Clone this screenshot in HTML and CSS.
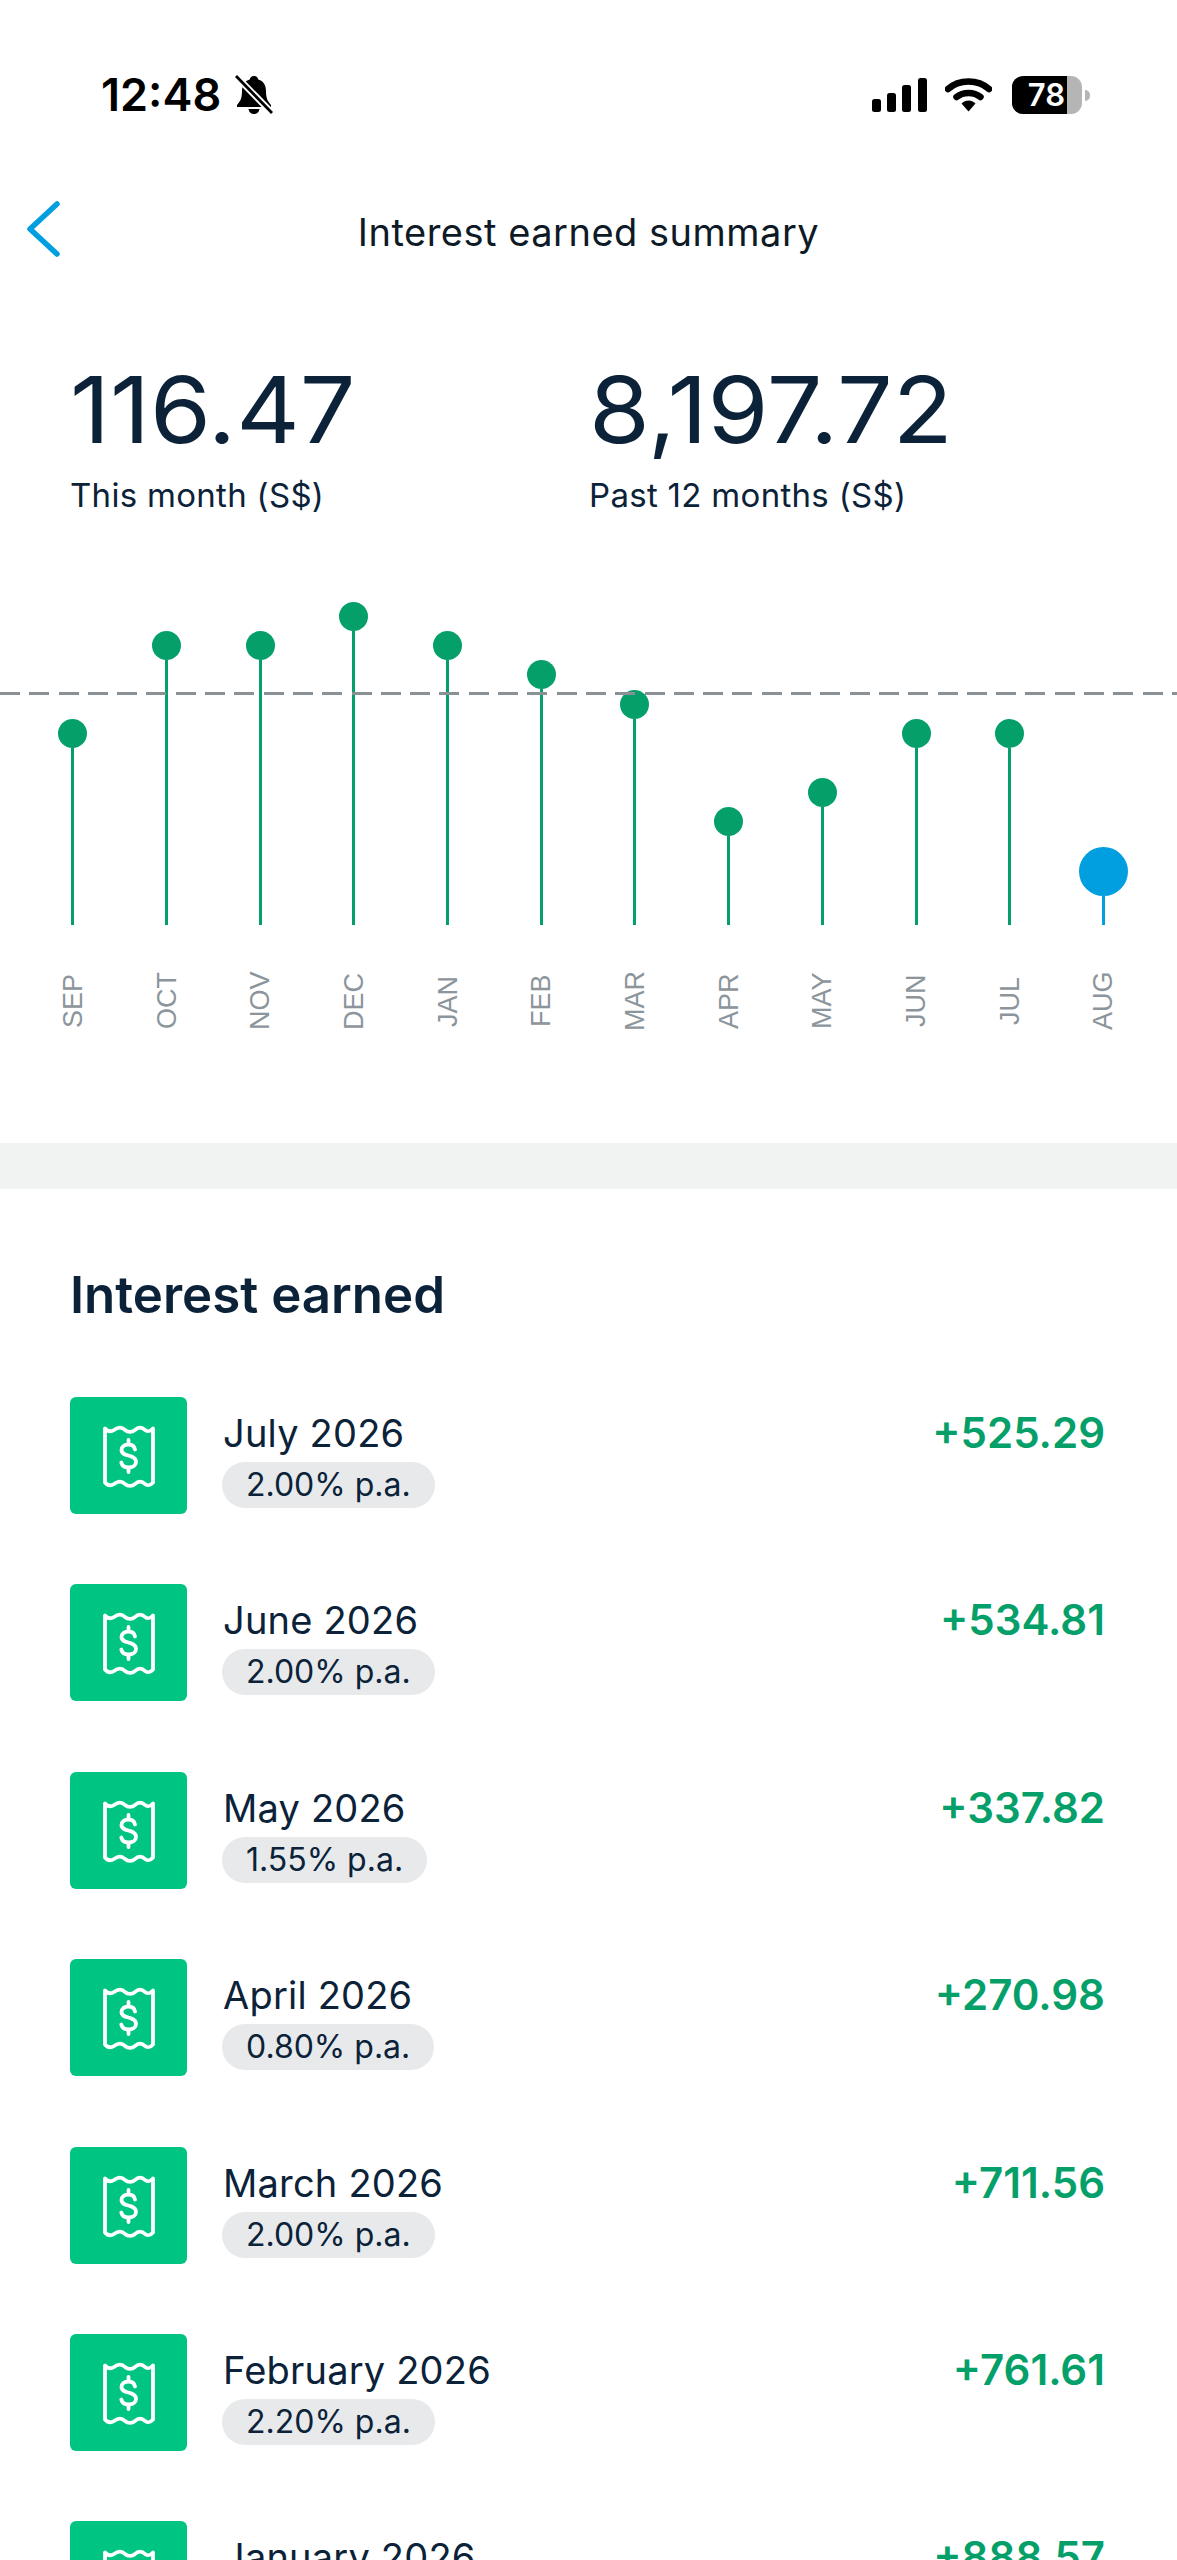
FILE: index.html
```html
<!DOCTYPE html>
<html lang="en">
<head>
    <meta charset="UTF-8">
    <meta name="viewport" content="width=device-width, initial-scale=1.0">
    <title>Interest earned summary</title>
    <link rel="stylesheet" href="styles.css">
</head>
<body>
    <svg class="icon-defs" width="0" height="0">
        <symbol id="receipt" viewBox="0 0 117 117">
            <path d="M35 31.5 L35 85.5 C38 89 41 89 44 87 C48 84 52 84 55 87 C58 89.5 62 89.5 65 87 C68 84 72 84 75 87 C78 89 80 89 83 85.5 L83 31.5 C80 35 78 35 75 33 C72 30 68 30 65 33 C62 35.5 58 35.5 55 33 C52 30 48 30 44 33 C41 35 38 35 35 31.5 Z" fill="none" stroke="#fff" stroke-width="3.8" stroke-linejoin="round"/>
            <path d="M65 52.5 C64.5 49.5 62 47.5 58.5 47.5 C54.5 47.5 51.5 49.7 51.5 53 C51.5 60.5 66 56.5 66 65 C66 68.3 62.8 70.5 58.5 70.5 C54.8 70.5 52 68.5 51.3 65.5 M58.5 43 L58.5 47.5 M58.5 70.5 L58.5 75" fill="none" stroke="#fff" stroke-width="3.8" stroke-linecap="round"/>
        </symbol>
    </svg>

    <div class="status-bar">
        <div class="status-left">
            <span class="clock">12:48</span>
            <svg class="bell" width="38" height="40" viewBox="0 0 38 40">
                <path d="M19 1 C21.5 1 23 2.6 23.3 4.6 C28.5 6 31 10.5 31 16 C31 23 32.5 26 36 30 L36 32 L2 32 L2 30 C5.5 26 7 23 7 16 C7 10.5 9.5 6 14.7 4.6 C15 2.6 16.5 1 19 1 Z M13.5 34 L24.5 34 C24 37.2 22 39 19 39 C16 39 14 37.2 13.5 34 Z" fill="#000"/>
                <path d="M1 1 L37 38" stroke="#fff" stroke-width="6.5"/>
                <path d="M1 1 L37 38" stroke="#000" stroke-width="2.8"/>
            </svg>
        </div>
        <div class="status-right">
            <svg class="signal" width="55" height="34" viewBox="0 0 55 34">
                <rect x="0" y="21" width="9" height="13" rx="2.5"/>
                <rect x="15" y="15" width="9" height="19" rx="2.5"/>
                <rect x="30" y="7" width="9" height="27" rx="2.5"/>
                <rect x="46" y="0" width="9" height="34" rx="2.5"/>
            </svg>
            <svg class="wifi" width="47" height="34" viewBox="0 0 47 34">
                <path d="M3 11 C14 1 33 1 44 11" fill="none" stroke="#000" stroke-width="6.5" stroke-linecap="round"/>
                <path d="M11.5 19 C18 13.5 29 13.5 35.5 19" fill="none" stroke="#000" stroke-width="6.5" stroke-linecap="round"/>
                <path d="M16.5 25.5 C20.5 21.5 26.5 21.5 30.5 25.5 L23.5 33.5 Z" fill="#000"/>
            </svg>
            <div class="battery">
                <div class="battery-level">78</div>
            </div>
            <div class="battery-nub"></div>
        </div>
    </div>

    <div class="nav">
        <svg class="back" width="36" height="58" viewBox="0 0 36 58">
            <path d="M32 4 L5 29 L32 54" fill="none" stroke="#019fdf" stroke-width="5.5" stroke-linecap="round" stroke-linejoin="round"/>
        </svg>
        <div class="nav-title">Interest earned summary</div>
    </div>

    <div class="stats">
        <div class="stat stat-month">
            <div class="stat-value">116.47</div>
            <div class="stat-label">This month (S$)</div>
        </div>
        <div class="stat">
            <div class="stat-value">8,197.72</div>
            <div class="stat-label">Past 12 months (S$)</div>
        </div>
    </div>

    <div class="chart">
        <div class="avg-line"></div>
        <div class="month"><div class="dot"></div><div class="stem" style="height:177px"></div><div class="month-name">SEP</div></div>
        <div class="month"><div class="dot"></div><div class="stem" style="height:265px"></div><div class="month-name">OCT</div></div>
        <div class="month"><div class="dot"></div><div class="stem" style="height:265px"></div><div class="month-name">NOV</div></div>
        <div class="month"><div class="dot"></div><div class="stem" style="height:294px"></div><div class="month-name">DEC</div></div>
        <div class="month"><div class="dot"></div><div class="stem" style="height:265px"></div><div class="month-name">JAN</div></div>
        <div class="month"><div class="dot"></div><div class="stem" style="height:236px"></div><div class="month-name">FEB</div></div>
        <div class="month"><div class="dot"></div><div class="stem" style="height:206px"></div><div class="month-name">MAR</div></div>
        <div class="month"><div class="dot"></div><div class="stem" style="height:89px"></div><div class="month-name">APR</div></div>
        <div class="month"><div class="dot"></div><div class="stem" style="height:118px"></div><div class="month-name">MAY</div></div>
        <div class="month"><div class="dot"></div><div class="stem" style="height:177px"></div><div class="month-name">JUN</div></div>
        <div class="month"><div class="dot"></div><div class="stem" style="height:177px"></div><div class="month-name">JUL</div></div>
        <div class="month month-current"><div class="dot"></div><div class="stem" style="height:29px"></div><div class="month-name">AUG</div></div>
    </div>

    <div class="divider"></div>

    <div class="earned">
        <h2>Interest earned</h2>

        <div class="row">
            <div class="row-icon"><svg width="117" height="117"><use href="#receipt"/></svg></div>
            <div class="row-info">
                <div class="row-name">July 2026</div>
                <div class="rate">2.00% p.a.</div>
            </div>
            <div class="amount">+525.29</div>
        </div>

        <div class="row">
            <div class="row-icon"><svg width="117" height="117"><use href="#receipt"/></svg></div>
            <div class="row-info">
                <div class="row-name">June 2026</div>
                <div class="rate">2.00% p.a.</div>
            </div>
            <div class="amount">+534.81</div>
        </div>

        <div class="row">
            <div class="row-icon"><svg width="117" height="117"><use href="#receipt"/></svg></div>
            <div class="row-info">
                <div class="row-name">May 2026</div>
                <div class="rate">1.55% p.a.</div>
            </div>
            <div class="amount">+337.82</div>
        </div>

        <div class="row">
            <div class="row-icon"><svg width="117" height="117"><use href="#receipt"/></svg></div>
            <div class="row-info">
                <div class="row-name">April 2026</div>
                <div class="rate">0.80% p.a.</div>
            </div>
            <div class="amount">+270.98</div>
        </div>

        <div class="row">
            <div class="row-icon"><svg width="117" height="117"><use href="#receipt"/></svg></div>
            <div class="row-info">
                <div class="row-name">March 2026</div>
                <div class="rate">2.00% p.a.</div>
            </div>
            <div class="amount">+711.56</div>
        </div>

        <div class="row">
            <div class="row-icon"><svg width="117" height="117"><use href="#receipt"/></svg></div>
            <div class="row-info">
                <div class="row-name">February 2026</div>
                <div class="rate">2.20% p.a.</div>
            </div>
            <div class="amount">+761.61</div>
        </div>

        <div class="row">
            <div class="row-icon"><svg width="117" height="117"><use href="#receipt"/></svg></div>
            <div class="row-info">
                <div class="row-name">January 2026</div>
            </div>
            <div class="amount">+888.57</div>
        </div>
    </div>
</body>
</html>
```

FILE: styles.css
```css
html {
    height: 2560px;
    overflow: hidden;
}

body {
    font-family: 'Inter', 'Liberation Sans', sans-serif;
    background-color: #fff;
    color: #0b2239;
    margin: 0;
    padding: 0;
    height: 2560px;
    overflow: hidden;
}

.icon-defs {
    position: absolute;
}

/* status bar */
.status-bar {
    display: flex;
    justify-content: space-between;
    align-items: center;
    height: 76px;
    padding: 57px 87px 0 101px;
    color: #000;
}

.status-left {
    display: flex;
    align-items: center;
    gap: 14px;
}

.clock {
    font-size: 45px;
    font-weight: 600;
    line-height: 56px;
    letter-spacing: 0;
}

.status-right {
    display: flex;
    align-items: center;
}

.signal {
    margin-right: 18px;
}

.wifi {
    margin-right: 20px;
}

.battery {
    width: 70px;
    height: 38px;
    background-color: #b5b5b5;
    border-radius: 11px;
    overflow: hidden;
}

.battery-level {
    width: 55px;
    height: 38px;
    background-color: #000;
    color: #fff;
    font-size: 31px;
    font-weight: 600;
    line-height: 38px;
    text-align: right;
    padding-right: 2px;
    box-sizing: border-box;
}

.battery-nub {
    width: 5px;
    height: 11px;
    margin-left: 3px;
    background-color: #b5b5b5;
    border-radius: 0 6px 6px 0;
}

/* nav */
.nav {
    display: flex;
    justify-content: center;
    align-items: center;
    position: relative;
    height: 58px;
    margin-top: 67px;
}

.back {
    position: absolute;
    left: 25px;
    top: 0;
}

.nav-title {
    font-size: 38px;
    line-height: 58px;
    letter-spacing: 0.5px;
    margin-top: 6px;
    color: #0e1a26;
}

/* totals */
.stats {
    display: flex;
    padding: 0 70px;
    margin-top: 102px;
}

.stat-month {
    width: 519px;
}

.stat-value {
    font-size: 92px;
    line-height: 100px;
    transform: scaleX(1.07);
    transform-origin: left center;
}

.stat-label {
    font-size: 33px;
    line-height: 40px;
    letter-spacing: 0.3px;
    margin-top: 15px;
}

/* chart */
.chart {
    display: flex;
    position: relative;
    align-items: flex-start;
    padding: 0 0 107px 26px;
}

.avg-line {
    position: absolute;
    left: 0;
    right: 0;
    top: 177px;
    height: 3px;
    background-image: repeating-linear-gradient(to right, #8a9196 0, #8a9196 20px, transparent 20px, transparent 29.3px);
}

.month {
    display: flex;
    flex-direction: column;
    align-items: center;
    justify-content: flex-end;
    width: 93.7px;
    height: 521px;
}

.dot {
    width: 29px;
    height: 29px;
    border-radius: 50%;
    background-color: #05a06a;
}

.stem {
    width: 3px;
    background-color: #05a06a;
}

.month-name {
    height: 70px;
    margin-top: 41px;
    writing-mode: vertical-rl;
    transform: rotate(180deg);
    text-align: center;
    font-family: 'Liberation Sans', sans-serif;
    font-size: 27px;
    line-height: 30px;
    color: #8b959b;
}

.month-current .dot {
    width: 49px;
    height: 49px;
    background-color: #019fdf;
}

.month-current .stem {
    background-color: #019fdf;
}

.divider {
    height: 46px;
    background-color: #f1f3f3;
}

/* list */
.earned {
    padding: 0 72px 0 70px;
}

.earned h2 {
    font-size: 51px;
    font-weight: 600;
    line-height: 60px;
    margin: 76px 0 72px;
}

.row {
    display: flex;
    height: 117px;
    margin-bottom: 70.4px;
}

.row-icon {
    width: 117px;
    height: 117px;
    border-radius: 6px;
    background-color: #00c482;
    flex-shrink: 0;
}

.row-info {
    flex: 1;
    margin-left: 36px;
    padding-top: 11px;
}

.row-name {
    font-size: 38px;
    line-height: 50px;
    letter-spacing: 0.2px;
    margin-bottom: 4px;
}

.rate {
    display: inline-block;
    height: 46px;
    line-height: 46px;
    padding: 0 24px;
    margin-left: -1px;
    border-radius: 23px;
    background-color: #e7e9eb;
    font-size: 32px;
}

.amount {
    font-size: 42px;
    font-weight: 600;
    line-height: 60px;
    color: #05a06a;
    padding-top: 6px;
}
```
